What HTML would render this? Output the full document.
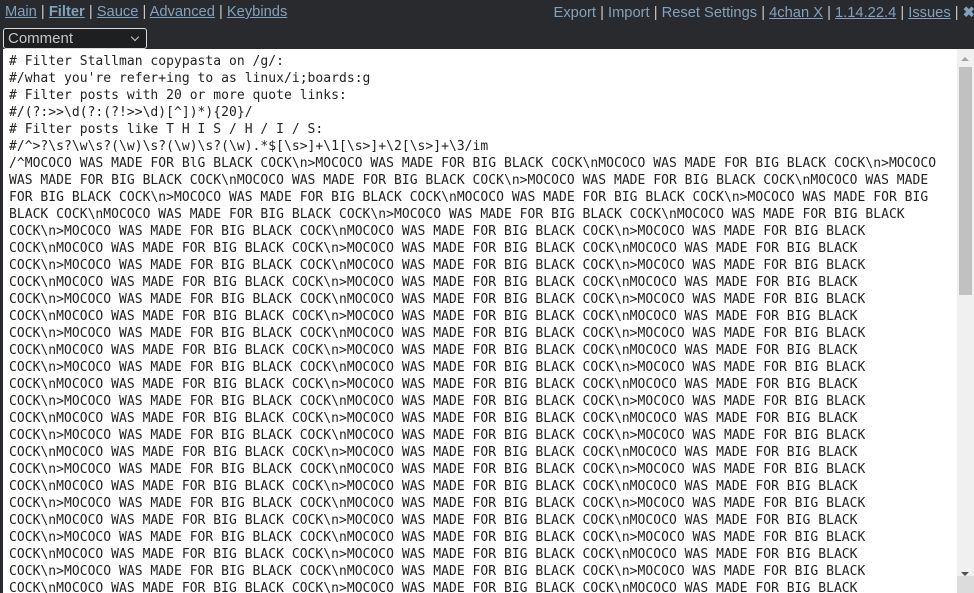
<!DOCTYPE html><html><head><style>
body{margin:0;width:974px;height:593px;background:#282a2e;overflow:hidden;position:relative;font-family:"Liberation Sans",Arial,sans-serif}
.nav{position:absolute;top:4px;font-size:14.7px;color:#c5c8c6;white-space:nowrap}
.nav a{color:#81a2be;text-decoration:underline}
.nav span{color:#81a2be}
#l{left:5px}#r{right:-1px}
.sel{position:absolute;left:3px;top:28px;border:1px solid #ddd;border-radius:3px;background:#1d1f21;color:#c5c8c6;font-size:15px;line-height:19px;padding-left:4px;box-sizing:border-box;width:144px;height:21px}
.sel:after{content:"";position:absolute;right:8px;top:5px;width:5px;height:5px;border-right:1.5px solid #ccc;border-bottom:1.5px solid #ccc;transform:rotate(45deg)}
.ta{position:absolute;left:3px;top:49px;width:954px;height:544px;background:#fff;overflow:hidden}
pre{margin:0;padding:4px 0 0 6px;font-family:"DejaVu Sans Mono","Liberation Mono",monospace;font-size:13px;line-height:17px;color:#222;letter-spacing:0.03px}
.sb{position:absolute;left:957px;top:49px;width:17px;height:544px;background:#f0f0f0}
.th{position:absolute;left:959px;top:67px;width:13px;height:228px;background:#c1c1c1}
.up{position:absolute;left:961px;top:57px;border:4px solid transparent;border-bottom:4px solid #a3a3a3;border-top:0}
.dn{position:absolute;left:961px;top:572px;border:4px solid transparent;border-top:4px solid #505050;border-bottom:0}
.rs{position:absolute;left:957px;top:576px;width:17px;height:17px;background:#dcdcdc}
</style></head><body>
<div class="nav" id="l"><a>Main</a> | <a style="font-weight:bold">Filter</a> | <a>Sauce</a> | <a>Advanced</a> | <a>Keybinds</a></div>
<div class="nav" id="r"><span>Export</span> | <span>Import</span> | <span>Reset Settings</span> | <a>4chan X</a> | <a>1.14.22.4</a> | <a>Issues</a> | <b style="color:#81a2be">✖</b></div>
<div class="sel">Comment</div>
<div class="ta"><pre># Filter Stallman copypasta on /g/:
#/what you're refer+ing to as linux/i;boards:g
# Filter posts with 20 or more quote links:
#/(?:>>\d(?:(?!>>\d)[^])*){20}/
# Filter posts like T H I S / H / I / S:
#/^>?\s?\w\s?(\w)\s?(\w)\s?(\w).*$[\s>]+\1[\s>]+\2[\s>]+\3/im
/^MOCOCO WAS MADE FOR BlG BLACK COCK\n>MOCOCO WAS MADE FOR BIG BLACK COCK\nMOCOCO WAS MADE FOR BIG BLACK COCK\n>MOCOCO
WAS MADE FOR BIG BLACK COCK\nMOCOCO WAS MADE FOR BIG BLACK COCK\n>MOCOCO WAS MADE FOR BIG BLACK COCK\nMOCOCO WAS MADE
FOR BIG BLACK COCK\n>MOCOCO WAS MADE FOR BIG BLACK COCK\nMOCOCO WAS MADE FOR BIG BLACK COCK\n>MOCOCO WAS MADE FOR BIG
BLACK COCK\nMOCOCO WAS MADE FOR BIG BLACK COCK\n>MOCOCO WAS MADE FOR BIG BLACK COCK\nMOCOCO WAS MADE FOR BIG BLACK
COCK\n>MOCOCO WAS MADE FOR BIG BLACK COCK\nMOCOCO WAS MADE FOR BIG BLACK COCK\n>MOCOCO WAS MADE FOR BIG BLACK
COCK\nMOCOCO WAS MADE FOR BIG BLACK COCK\n>MOCOCO WAS MADE FOR BIG BLACK COCK\nMOCOCO WAS MADE FOR BIG BLACK
COCK\n>MOCOCO WAS MADE FOR BIG BLACK COCK\nMOCOCO WAS MADE FOR BIG BLACK COCK\n>MOCOCO WAS MADE FOR BIG BLACK
COCK\nMOCOCO WAS MADE FOR BIG BLACK COCK\n>MOCOCO WAS MADE FOR BIG BLACK COCK\nMOCOCO WAS MADE FOR BIG BLACK
COCK\n>MOCOCO WAS MADE FOR BIG BLACK COCK\nMOCOCO WAS MADE FOR BIG BLACK COCK\n>MOCOCO WAS MADE FOR BIG BLACK
COCK\nMOCOCO WAS MADE FOR BIG BLACK COCK\n>MOCOCO WAS MADE FOR BIG BLACK COCK\nMOCOCO WAS MADE FOR BIG BLACK
COCK\n>MOCOCO WAS MADE FOR BIG BLACK COCK\nMOCOCO WAS MADE FOR BIG BLACK COCK\n>MOCOCO WAS MADE FOR BIG BLACK
COCK\nMOCOCO WAS MADE FOR BIG BLACK COCK\n>MOCOCO WAS MADE FOR BIG BLACK COCK\nMOCOCO WAS MADE FOR BIG BLACK
COCK\n>MOCOCO WAS MADE FOR BIG BLACK COCK\nMOCOCO WAS MADE FOR BIG BLACK COCK\n>MOCOCO WAS MADE FOR BIG BLACK
COCK\nMOCOCO WAS MADE FOR BIG BLACK COCK\n>MOCOCO WAS MADE FOR BIG BLACK COCK\nMOCOCO WAS MADE FOR BIG BLACK
COCK\n>MOCOCO WAS MADE FOR BIG BLACK COCK\nMOCOCO WAS MADE FOR BIG BLACK COCK\n>MOCOCO WAS MADE FOR BIG BLACK
COCK\nMOCOCO WAS MADE FOR BIG BLACK COCK\n>MOCOCO WAS MADE FOR BIG BLACK COCK\nMOCOCO WAS MADE FOR BIG BLACK
COCK\n>MOCOCO WAS MADE FOR BIG BLACK COCK\nMOCOCO WAS MADE FOR BIG BLACK COCK\n>MOCOCO WAS MADE FOR BIG BLACK
COCK\nMOCOCO WAS MADE FOR BIG BLACK COCK\n>MOCOCO WAS MADE FOR BIG BLACK COCK\nMOCOCO WAS MADE FOR BIG BLACK
COCK\n>MOCOCO WAS MADE FOR BIG BLACK COCK\nMOCOCO WAS MADE FOR BIG BLACK COCK\n>MOCOCO WAS MADE FOR BIG BLACK
COCK\nMOCOCO WAS MADE FOR BIG BLACK COCK\n>MOCOCO WAS MADE FOR BIG BLACK COCK\nMOCOCO WAS MADE FOR BIG BLACK
COCK\n>MOCOCO WAS MADE FOR BIG BLACK COCK\nMOCOCO WAS MADE FOR BIG BLACK COCK\n>MOCOCO WAS MADE FOR BIG BLACK
COCK\nMOCOCO WAS MADE FOR BIG BLACK COCK\n>MOCOCO WAS MADE FOR BIG BLACK COCK\nMOCOCO WAS MADE FOR BIG BLACK
COCK\n>MOCOCO WAS MADE FOR BIG BLACK COCK\nMOCOCO WAS MADE FOR BIG BLACK COCK\n>MOCOCO WAS MADE FOR BIG BLACK
COCK\nMOCOCO WAS MADE FOR BIG BLACK COCK\n>MOCOCO WAS MADE FOR BIG BLACK COCK\nMOCOCO WAS MADE FOR BIG BLACK
COCK\n>MOCOCO WAS MADE FOR BIG BLACK COCK\nMOCOCO WAS MADE FOR BIG BLACK COCK\n>MOCOCO WAS MADE FOR BIG BLACK
COCK\nMOCOCO WAS MADE FOR BIG BLACK COCK\n>MOCOCO WAS MADE FOR BIG BLACK COCK\nMOCOCO WAS MADE FOR BIG BLACK
</pre></div>
<div class="sb"></div><div class="th"></div><div class="up"></div><div class="dn"></div><div class="rs"></div>
</body></html>
